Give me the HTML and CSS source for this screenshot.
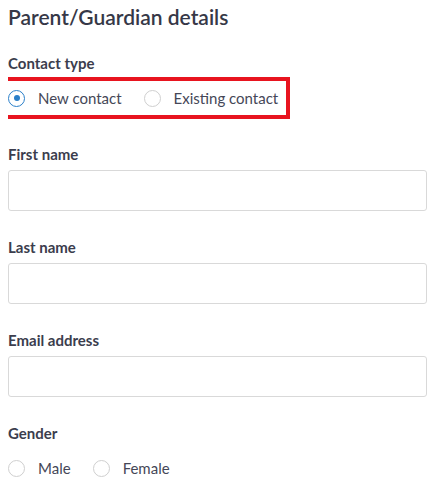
FILE: index.html
```html
<!DOCTYPE html>
<html>
<head>
<meta charset="utf-8">
<link rel="stylesheet" href="styles.css">
</head>
<body>
<form class="form">
  <h2 class="title">Parent/Guardian details</h2>
  <div class="field field-radio">
    <div class="label">Contact type</div>
    <div class="radios highlight">
      <label class="radio"><span class="dot checked"></span><span class="rtext">New contact</span></label>
      <label class="radio"><span class="dot"></span><span class="rtext">Existing contact</span></label>
    </div>
  </div>
  <div class="field">
    <div class="label">First name</div>
    <div class="input"></div>
  </div>
  <div class="field">
    <div class="label">Last name</div>
    <div class="input"></div>
  </div>
  <div class="field">
    <div class="label">Email address</div>
    <div class="input"></div>
  </div>
  <div class="field field-radio">
    <div class="label">Gender</div>
    <div class="radios">
      <label class="radio"><span class="dot"></span><span class="rtext">Male</span></label>
      <label class="radio"><span class="dot"></span><span class="rtext">Female</span></label>
    </div>
  </div>
</form>
</body>
</html>
```

FILE: styles.css
```css
html, body { background: #fff; }
body {
  margin: 8px;
  font-family: Lato, "Open Sans", sans-serif;
  color: #3b3d4d;
}
.form { display: flex; flex-direction: column; }
.title {
  margin: 0 0 27px 0;
  font-size: 21px;
  line-height: 18px;
  font-weight: 600;
  color: #363847;
}
.field { display: flex; flex-direction: column; margin-bottom: 26px; }
.field-radio { margin-bottom: 29px; }
.field:last-child { margin-bottom: 0; }
.label {
  font-size: 15px;
  font-weight: 700;
  line-height: 20px;
  margin-bottom: 6px;
  color: #3b3d4d;
}
.field-radio .label { margin-bottom: 8px; }
.input {
  height: 41px;
  box-sizing: border-box;
  border: 1px solid #d9d9d9;
  border-radius: 3px;
  background: #fff;
}
.radios {
  display: flex;
  align-items: center;
  gap: 22px;
  height: 34px;
}
.highlight {
  border: 4px solid #e8141f;
  margin: -4px 0 -4px -5px;
  padding-left: 1px;
  width: 278px;
}
.radio { display: flex; align-items: center; gap: 13px; }
.dot {
  width: 15px;
  height: 15px;
  border: 1px solid #cfcfcf;
  border-radius: 50%;
  display: flex;
  align-items: center;
  justify-content: center;
}
.dot.checked { border-color: #2a7fc9; }
.dot.checked::after {
  content: "";
  width: 6px;
  height: 6px;
  border-radius: 50%;
  background: #2a7fc9;
}
.rtext { font-size: 15px; color: #454757; }
```
